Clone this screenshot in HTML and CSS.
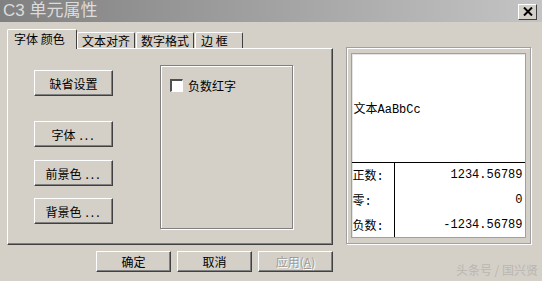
FILE: index.html
```html
<!DOCTYPE html>
<html lang="zh">
<head>
    <meta charset="UTF-8">
    <title>C3 单元属性</title>
    <link rel="stylesheet" href="styles.css">
</head>
<body>
    <div class="window">
        <div class="titlebar">
            <span class="title">C3 单元属性</span>
            <span class="closeBtn">
                <svg width="10" height="9" viewBox="0 0 10 9">
                    <path d="M1 0.5 L9 8.5 M9 0.5 L1 8.5" stroke="#000" stroke-width="2"/>
                </svg>
            </span>
        </div>

        <div class="content">
            <div class="leftSide">
                <div class="tabs">
                    <span class="tab active">字体 颜色</span>
                    <span class="tab t2">文本对齐</span>
                    <span class="tab t3">数字格式</span>
                    <span class="tab t4">边 框</span>
                </div>

                <div class="panel">
                    <div class="btnColumn">
                        <span class="button b1">缺省设置</span>
                        <span class="button b2">字体 <span class="dots">...</span></span>
                        <span class="button b3">前景色 <span class="dots">...</span></span>
                        <span class="button b4">背景色 <span class="dots">...</span></span>
                    </div>
                    <div class="groupBox">
                        <label class="checkRow">
                            <span class="checkBox"></span>
                            负数红字
                        </label>
                    </div>
                </div>

                <div class="actions">
                    <span class="button action">确定</span>
                    <span class="button action">取消</span>
                    <span class="button action disabled">应用(<u>A</u>)</span>
                </div>
            </div>

            <div class="preview">
                <div class="previewInner">
                    <div class="sample">文本AaBbCc</div>
                    <div class="numRow">
                        <span class="numLabel">正数:</span>
                        <span class="numValue">1234.56789</span>
                    </div>
                    <div class="numRow">
                        <span class="numLabel">零:</span>
                        <span class="numValue">0</span>
                    </div>
                    <div class="numRow">
                        <span class="numLabel">负数:</span>
                        <span class="numValue">-1234.56789</span>
                    </div>
                </div>
            </div>
        </div>

        <div class="watermark">头条号 / 国兴贤</div>
    </div>
</body>
</html>
```

FILE: styles.css
```css
* {
    box-sizing: border-box;
}

body {
    margin: 0;
    font-family: "Noto Sans CJK SC", "Liberation Sans", sans-serif;
    font-size: 12px;
    color: #000;
}

.window {
    position: relative;
    width: 542px;
    height: 281px;
    background-color: #d4d0c8;
    overflow: hidden;
}

.titlebar {
    height: 22px;
    display: flex;
    align-items: center;
    justify-content: space-between;
    background: linear-gradient(to right, #808080, #c4c4c4);
    padding: 0 5px 0 3px;
}

.title {
    color: #dcdcdc;
    font-family: "Liberation Sans", "Noto Sans CJK SC", sans-serif;
    font-size: 17px;
    line-height: 22px;
}

.closeBtn {
    width: 19px;
    height: 16px;
    display: flex;
    align-items: center;
    justify-content: center;
    background-color: #d4d0c8;
    border-top: 1px solid #fff;
    border-left: 1px solid #fff;
    border-right: 1px solid #404040;
    border-bottom: 1px solid #404040;
    margin-top: 1px;
}

.content {
    display: flex;
    padding: 7px 0 0 7px;
}

.leftSide {
    width: 326px;
}

.tabs {
    display: flex;
    height: 19px;
    align-items: flex-end;
    position: relative;
    z-index: 1;
}

.tab {
    height: 16px;
    line-height: 15px;
    padding-left: 4px;
    border-top: 1px solid #fff;
    border-left: 1px solid #fff;
    border-right: 1px solid #404040;
    border-radius: 2px 2px 0 0;
    background-color: #d4d0c8;
    white-space: nowrap;
}

.tab.active {
    height: 20px;
    line-height: 18px;
    width: 70px;
    margin-bottom: -1px;
    padding-left: 6px;
}

.t2 { width: 58px; }
.t3 { width: 58px; margin-left: 1px; }
.t4 { width: 48px; margin-left: 1px; padding-left: 5px; }

.panel {
    height: 197px;
    display: flex;
    padding: 16px 0 0 26px;
    border-top: 1px solid #fff;
    border-left: 1px solid #fff;
    border-right: 1px solid #404040;
    border-bottom: 1px solid #404040;
    box-shadow: inset -1px -1px 0 #808080;
}

.btnColumn {
    display: flex;
    flex-direction: column;
    width: 79px;
    padding-top: 5px;
}

.button {
    display: flex;
    align-items: center;
    justify-content: center;
    height: 26px;
    background-color: #d4d0c8;
    border-top: 1px solid #fff;
    border-left: 1px solid #fff;
    border-right: 1px solid #404040;
    border-bottom: 1px solid #404040;
    box-shadow: inset -1px -1px 0 #808080;
    white-space: nowrap;
    font-size: 12px;
}

.dots {
    letter-spacing: 2px;
    margin-left: 4px;
}

.b2 { margin-top: 25px; }
.b3 { margin-top: 13px; }
.b4 { margin-top: 12px; }

.groupBox {
    margin-left: 47px;
    width: 133px;
    height: 164px;
    border: 1px solid #808080;
    box-shadow: 1px 1px 0 #fff, inset 1px 1px 0 #fff;
}

.checkRow {
    display: flex;
    align-items: center;
    gap: 5px;
    padding: 12px 0 0 9px;
    font-size: 12px;
    height: 27px;
}

.checkBox {
    width: 13px;
    height: 13px;
    background-color: #fff;
    border-top: 2px solid #505050;
    border-left: 2px solid #505050;
    border-right: 1px solid #fff;
    border-bottom: 1px solid #fff;
}

.actions {
    display: flex;
    gap: 6px;
    padding: 6px 0 0 89px;
}

.action {
    width: 75px;
    height: 21px;
}

.disabled {
    color: #a09c94;
    text-shadow: 1px 1px 0 #fff;
}

.preview {
    margin: 18px 0 0 13px;
    width: 185px;
    height: 197px;
    border: 1px solid #a0a0a0;
    box-shadow: 1px 1px 0 #fff, inset 1px 1px 0 #fff;
    display: flex;
    align-items: center;
    justify-content: center;
}

.previewInner {
    width: 175px;
    height: 185px;
    margin-right: 1px;
    background-color: #fff;
    border: 1px solid #a0a0a0;
    box-shadow: inset 1px 1px 0 #e4e4e4;
    display: flex;
    flex-direction: column;
    font-family: "Liberation Mono", "Noto Sans CJK SC", monospace;
    font-size: 12px;
    color: #000;
}

.sample {
    height: 109px;
    flex-shrink: 0;
    display: flex;
    align-items: center;
    padding-left: 2px;
    border-bottom: 1px solid #000;
}

.numRow {
    display: flex;
    height: 25px;
    align-items: center;
}

.numLabel {
    width: 43px;
    height: 100%;
    display: flex;
    align-items: center;
    padding-left: 1px;
    border-right: 1px solid #000;
}

.numValue {
    flex: 1;
    text-align: right;
    padding-right: 2px;
}

.watermark {
    position: absolute;
    right: 4px;
    bottom: 3px;
    color: #bab6b0;
    font-size: 12px;
}
```
